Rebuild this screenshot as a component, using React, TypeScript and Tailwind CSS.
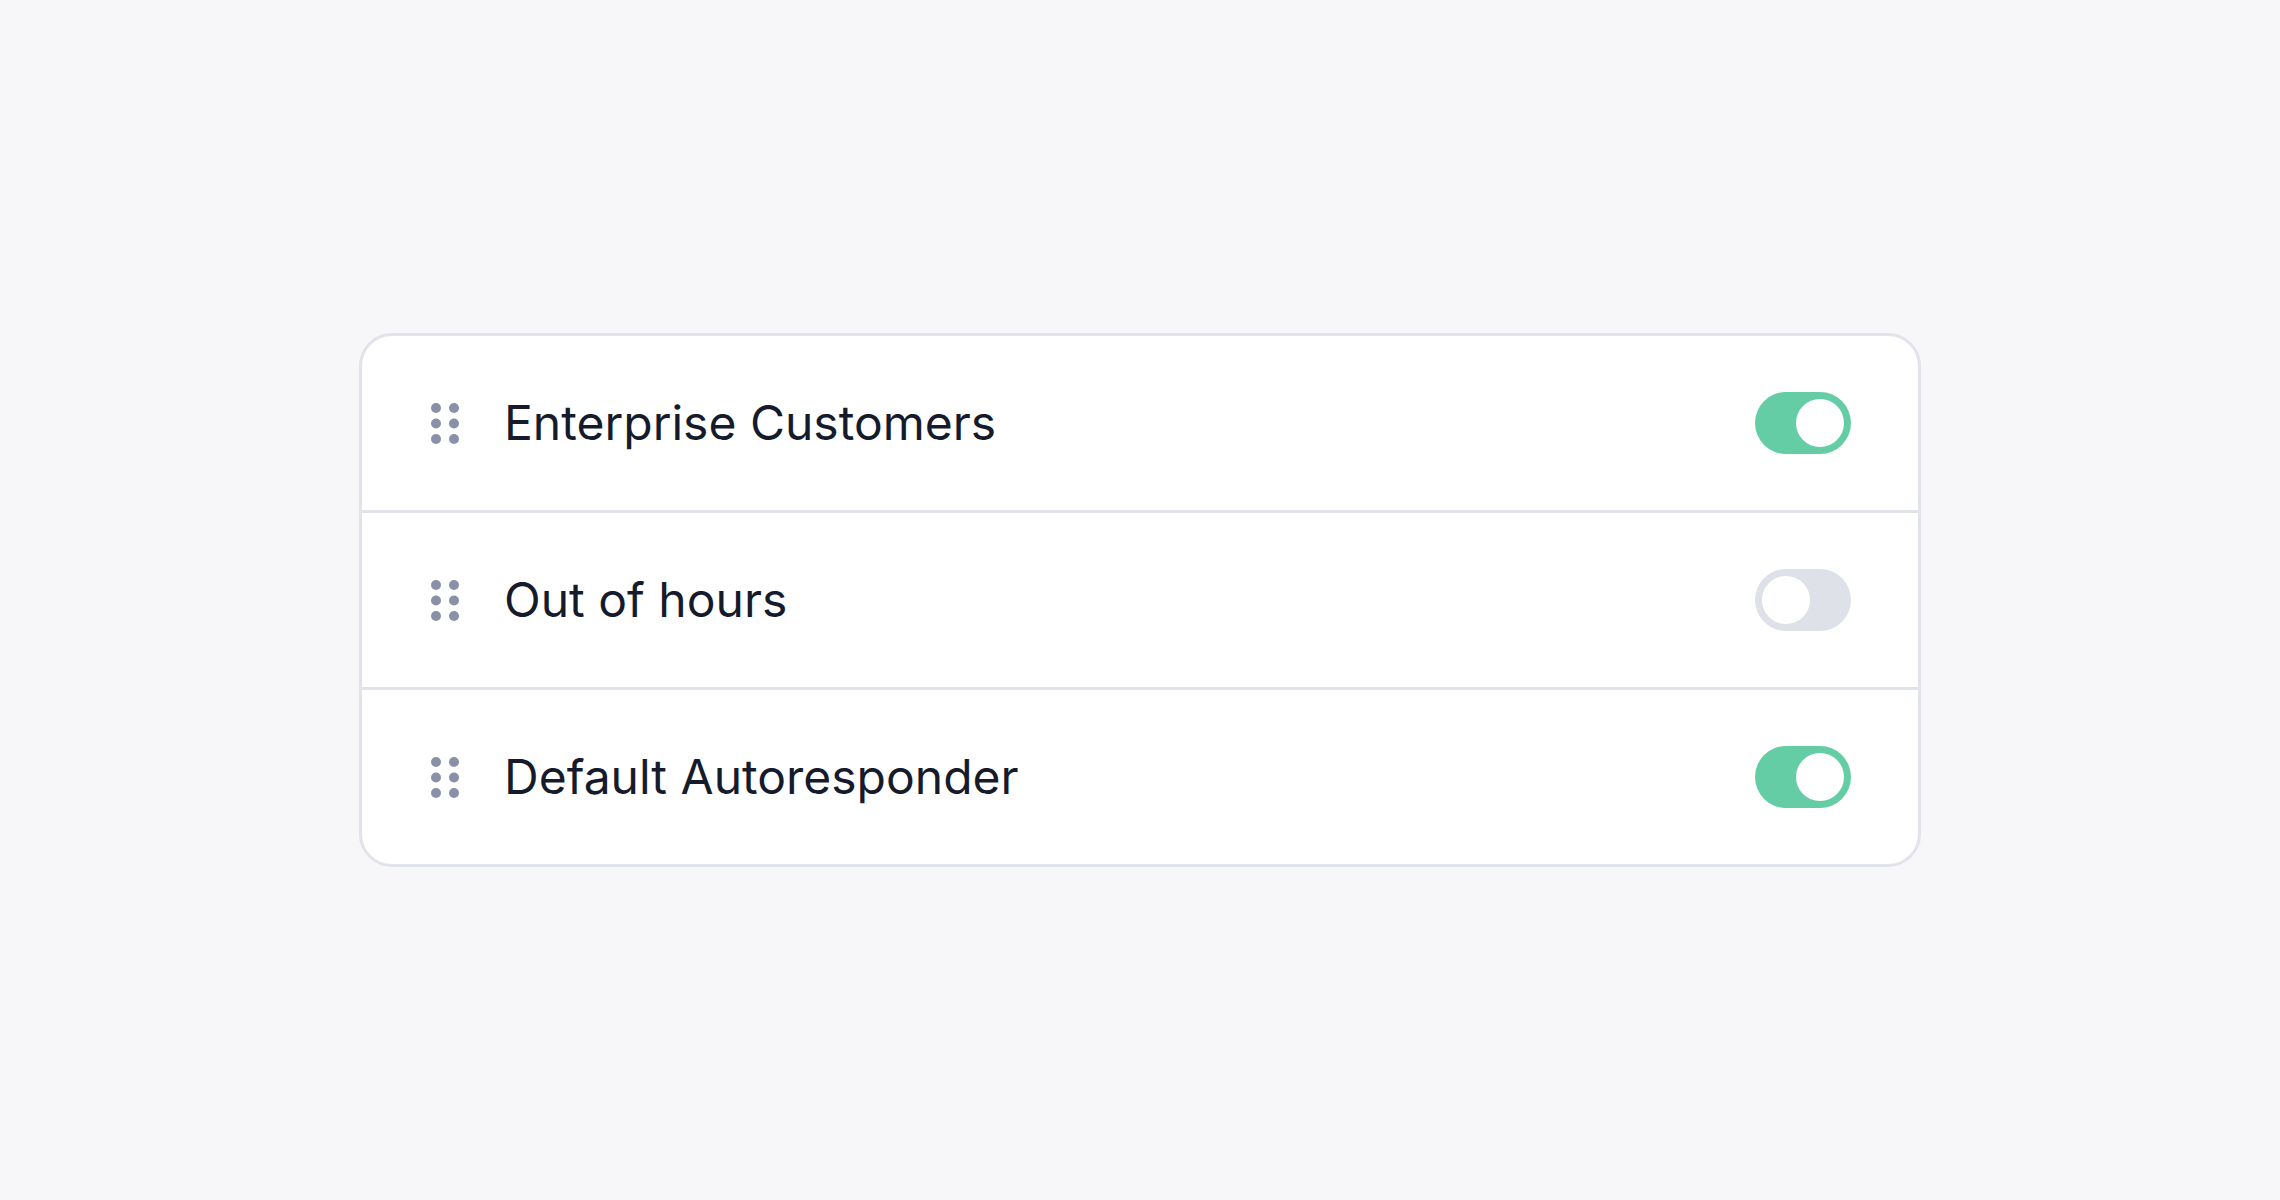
import React, { useState } from "react";

type Item = { id: string; label: string; enabled: boolean };

const initial: Item[] = [
  { id: "enterprise", label: "Enterprise Customers", enabled: true },
  { id: "ooh", label: "Out of hours", enabled: false },
  { id: "default", label: "Default Autoresponder", enabled: true },
];

function DragHandle() {
  return (
    <svg width="28" height="41" viewBox="0 0 28 41" className="shrink-0" aria-hidden="true">
      {[5, 20.5, 36].map((cy) =>
        [5, 23].map((cx) => <circle key={`${cx}-${cy}`} cx={cx} cy={cy} r="5" fill="#8b90a9" />)
      )}
    </svg>
  );
}

function Toggle({ on, onClick }: { on: boolean; onClick: () => void }) {
  return (
    <button
      type="button"
      role="switch"
      aria-checked={on}
      onClick={onClick}
      className={
        "flex h-[62px] w-[96px] shrink-0 items-center rounded-full p-[7px] " +
        (on ? "justify-end bg-[#64cda5]" : "justify-start bg-[#dfe1e8]")
      }
    >
      <span className="block h-[48px] w-[48px] rounded-full bg-white" />
    </button>
  );
}

export default function App() {
  const [items, setItems] = useState(initial);
  const flip = (id: string) =>
    setItems((list) => list.map((it) => (it.id === id ? { ...it, enabled: !it.enabled } : it)));

  return (
    <div
      className="flex h-screen w-full items-center justify-center bg-[#f7f7f9]"
      style={{ fontFamily: "Inter, 'Noto Sans', sans-serif" }}
    >
      <div className="w-[1562px] overflow-hidden rounded-[33px] border-[3px] border-[#e1e3ea] bg-white">
        <div className="divide-y-[3px] divide-[#e1e3ea]">
          {items.map((it) => (
            <div key={it.id} className="box-content flex h-[174px] items-center pl-[69px] pr-[67px]">
              <DragHandle />
              <span className="ml-[45px] flex-1 text-[48px] leading-none font-normal text-[#161b2b]">
                {it.label}
              </span>
              <Toggle on={it.enabled} onClick={() => flip(it.id)} />
            </div>
          ))}
        </div>
      </div>
    </div>
  );
}
